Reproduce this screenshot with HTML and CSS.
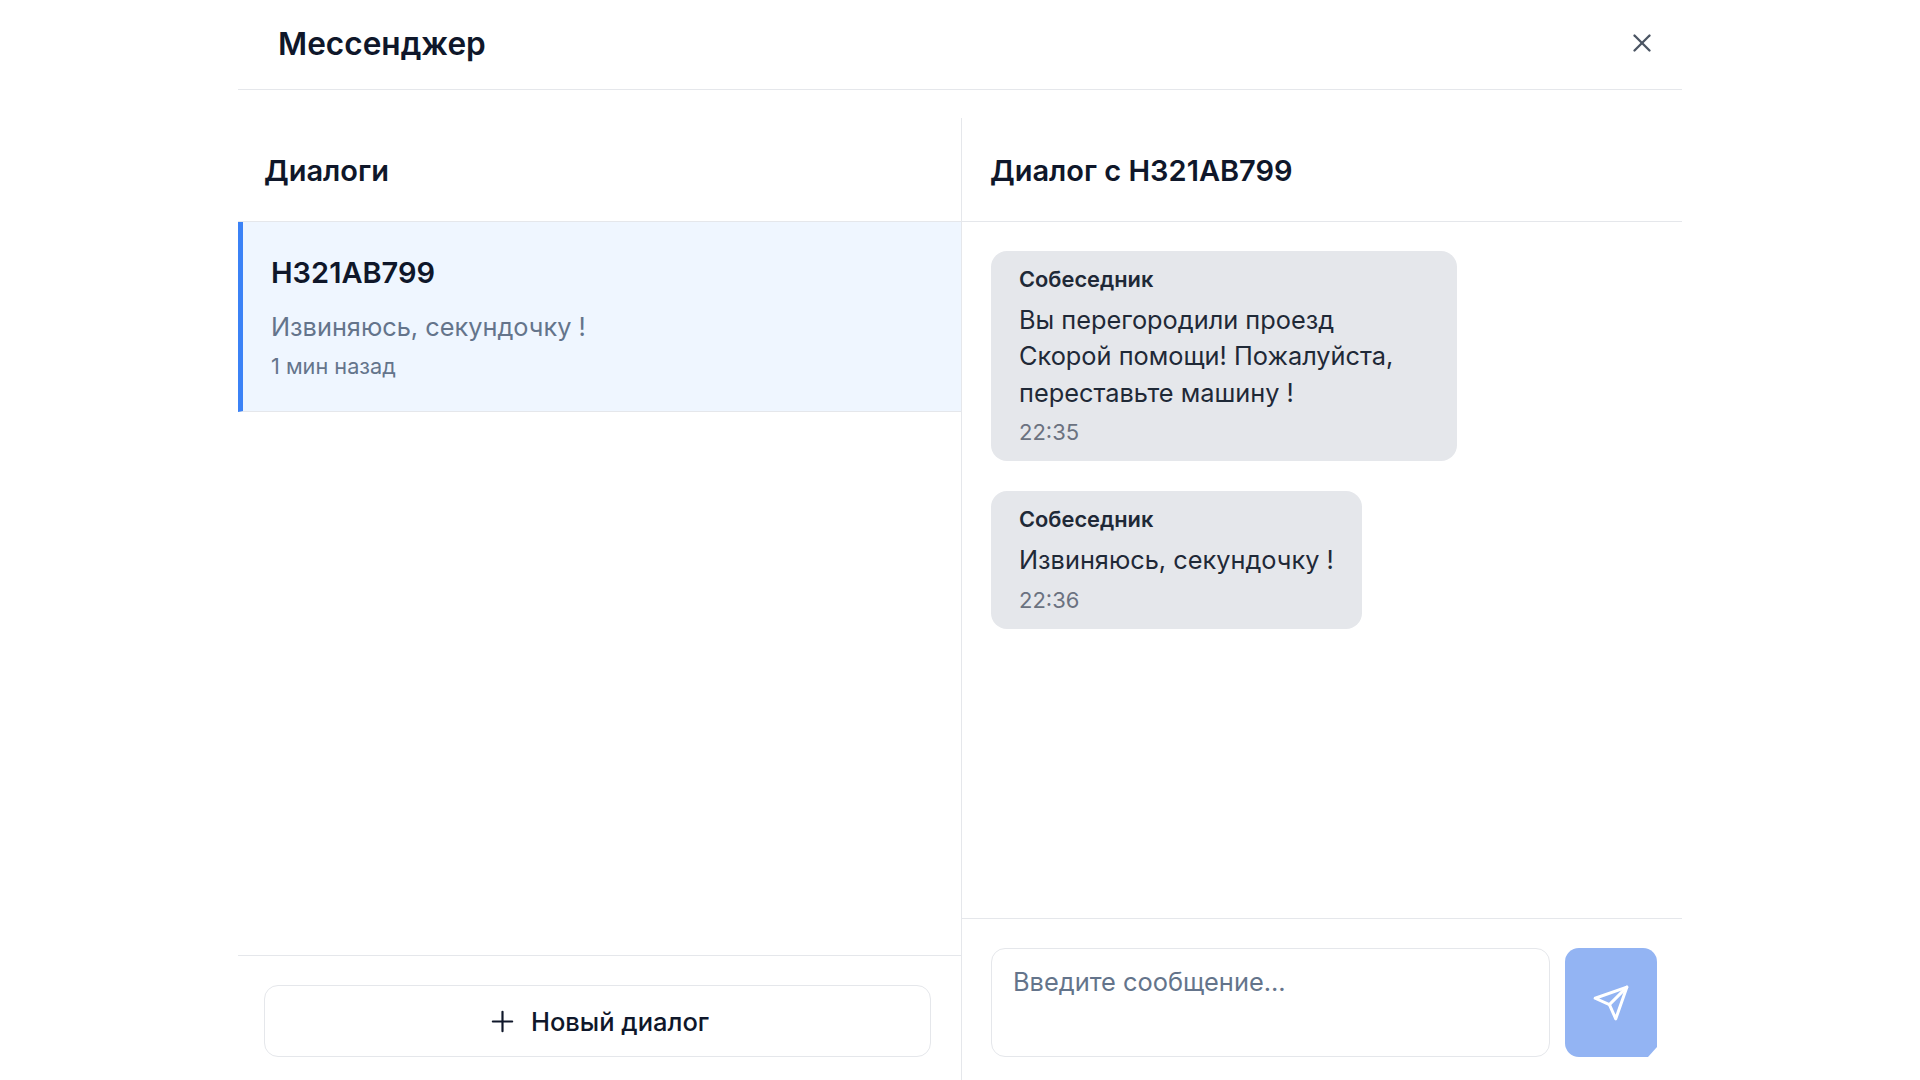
FILE: index.html
```html
<!DOCTYPE html>
<html lang="ru">
<head>
    <meta charset="UTF-8">
    <title>Мессенджер</title>
    <link rel="stylesheet" href="styles.css">
</head>
<body>
    <div class="messenger">
        <div class="top-bar">
            <h1 class="top-title">Мессенджер</h1>
            <button class="close-btn" aria-label="Закрыть">
                <svg width="30" height="30" viewBox="0 0 24 24" fill="none" stroke="currentColor" stroke-width="1.9" stroke-linecap="round"><line x1="18" y1="6" x2="6" y2="18"></line><line x1="6" y1="6" x2="18" y2="18"></line></svg>
            </button>
        </div>

        <div class="columns">
            <div class="dialogs">
                <div class="col-head dialogs-head">
                    <h2>Диалоги</h2>
                </div>
                <div class="dialog-list">
                    <div class="dialog-item active">
                        <div class="dialog-name">Н321АВ799</div>
                        <div class="dialog-preview">Извиняюсь, секундочку !</div>
                        <div class="dialog-time">1 мин назад</div>
                    </div>
                </div>
                <div class="dialogs-foot">
                    <button class="new-dialog">
                        <svg width="29" height="29" viewBox="0 0 24 24" fill="none" stroke="currentColor" stroke-width="1.8" stroke-linecap="round"><line x1="12" y1="4" x2="12" y2="20"></line><line x1="4" y1="12" x2="20" y2="12"></line></svg>
                        <span>Новый диалог</span>
                    </button>
                </div>
            </div>

            <div class="chat">
                <div class="col-head chat-head">
                    <h2>Диалог с Н321АВ799</h2>
                </div>
                <div class="messages">
                    <div class="bubble">
                        <div class="bubble-sender">Собеседник</div>
                        <div class="bubble-text">Вы перегородили проезд Скорой помощи! Пожалуйста, переставьте машину !</div>
                        <div class="bubble-time">22:35</div>
                    </div>
                    <div class="bubble">
                        <div class="bubble-sender">Собеседник</div>
                        <div class="bubble-text">Извиняюсь, секундочку !</div>
                        <div class="bubble-time">22:36</div>
                    </div>
                </div>
                <div class="chat-foot">
                    <textarea class="chat-input" placeholder="Введите сообщение..."></textarea>
                    <button class="send-btn" aria-label="Отправить">
                        <svg width="38" height="38" viewBox="0 0 24 24" fill="none" stroke="currentColor" stroke-width="1.9" stroke-linecap="round" stroke-linejoin="round"><line x1="22" y1="2" x2="11" y2="13"></line><polygon points="22 2 15 22 11 13 2 9 22 2"></polygon></svg>
                    </button>
                </div>
            </div>
        </div>
    </div>
</body>
</html>
```
FILE: styles.css
```css
* {
    box-sizing: border-box;
}

html, body {
    height: 100%;
}

body {
    margin: 0;
    background-color: #fff;
    color: #0f172a;
    font-family: Inter, "Noto Sans", sans-serif;
    overflow: hidden;
}

.messenger {
    width: 1444px;
    height: 1080px;
    margin: 0 auto;
    display: flex;
    flex-direction: column;
}

.top-bar {
    height: 90px;
    flex-shrink: 0;
    padding: 0 25px 2px 40px;
    display: flex;
    align-items: center;
    justify-content: space-between;
    border-bottom: 1px solid #e5e7eb;
}

.top-title {
    margin: 0;
    font-size: 31.6px;
    font-weight: 600;
}

.close-btn {
    margin-bottom: 2px;
    padding: 0;
    border: 0;
    background: none;
    color: #4b5563;
    display: flex;
}

.columns {
    flex: 1;
    min-height: 0;
    margin-top: 28px;
    display: flex;
}

.dialogs {
    width: 724px;
    flex-shrink: 0;
    display: flex;
    flex-direction: column;
    border-right: 1px solid #e5e7eb;
}

.col-head {
    height: 104px;
    flex-shrink: 0;
    padding-top: 2px;
    display: flex;
    align-items: center;
    border-bottom: 1px solid #e5e7eb;
}

.col-head h2 {
    margin: 0;
    font-size: 29px;
    font-weight: 600;
}

.dialogs-head {
    padding-left: 26px;
}

.chat-head {
    padding-left: 28px;
}

.dialog-list {
    flex: 1;
}

.dialog-item {
    height: 190px;
    padding: 32px 28px 0;
    border-left: 5px solid #3b82f6;
    border-bottom: 1px solid #e5e7eb;
}

.dialog-item.active {
    background-color: #eff6ff;
}

.dialog-name {
    font-size: 29px;
    font-weight: 600;
    line-height: 38px;
}

.dialog-preview {
    margin-top: 17px;
    font-size: 25.33px;
    line-height: 36px;
    color: #64748b;
}

.dialog-time {
    margin-top: 6px;
    font-size: 21.7px;
    line-height: 30px;
    color: #64748b;
}

.dialogs-foot {
    height: 125px;
    flex-shrink: 0;
    padding: 29px 30px 23px 26px;
    border-top: 1px solid #e5e7eb;
}

.new-dialog {
    width: 100%;
    height: 72px;
    border: 1px solid #e5e7eb;
    border-radius: 14px;
    background: #fff;
    color: #0f172a;
    font-family: inherit;
    font-size: 25.5px;
    font-weight: 500;
    display: flex;
    align-items: center;
    justify-content: center;
    gap: 14px;
}

.new-dialog svg {
    margin-left: 2px;
}

.chat {
    flex: 1;
    min-width: 0;
    display: flex;
    flex-direction: column;
}

.messages {
    flex: 1;
    min-height: 0;
    padding: 29px 29px 0;
    display: flex;
    flex-direction: column;
    align-items: flex-start;
    gap: 30px;
}

.bubble {
    max-width: 466px;
    padding: 13px 28px 14px;
    border-radius: 16px;
    background-color: #e5e7eb;
}

.bubble-sender {
    font-size: 21.8px;
    font-weight: 600;
    line-height: 30px;
    color: #1f2937;
}

.bubble-text {
    margin-top: 8px;
    font-size: 25.33px;
    line-height: 36.4px;
    color: #1f2937;
}

.bubble-time {
    margin-top: 6px;
    font-size: 22px;
    line-height: 30px;
    color: #6b7280;
}

.chat-foot {
    height: 162px;
    flex-shrink: 0;
    padding: 29px 25px 23px 29px;
    display: flex;
    gap: 15px;
    border-top: 1px solid #e5e7eb;
}

.chat-input {
    flex: 1;
    padding: 15px 21px;
    border: 1px solid #e5e7eb;
    border-radius: 14px;
    font-family: inherit;
    font-size: 25.4px;
    line-height: 36px;
    resize: none;
}

.chat-input::placeholder {
    color: #64748b;
    opacity: 1;
}

.send-btn {
    width: 92px;
    padding: 0;
    border: 0;
    border-radius: 14px 14px 0 14px;
    background-color: #93b4f3;
    color: #fff;
    display: flex;
    align-items: center;
    justify-content: center;
    clip-path: polygon(0 0, 100% 0, 100% calc(100% - 10px), calc(100% - 9px) 100%, 0 100%);
}
```
